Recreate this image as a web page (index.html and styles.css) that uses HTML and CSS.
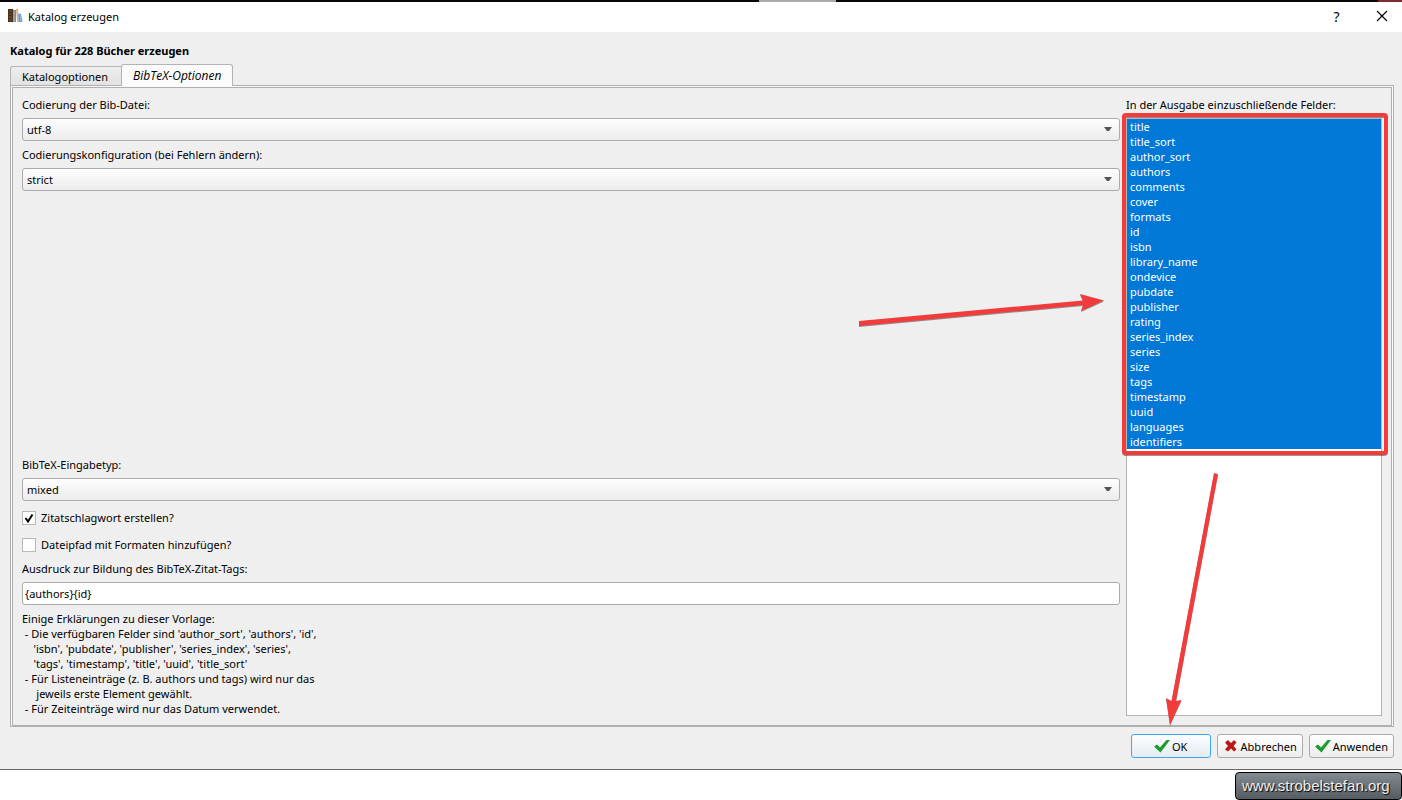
FILE: index.html
```
<!DOCTYPE html>
<html lang="de">
<head>
    <meta charset="utf-8">
    <title>Katalog erzeugen</title>
    <meta name="viewport" content="width=device-width, initial-scale=1.0">
    <link rel="stylesheet" href="styles.css">
</head>
<body>
    <div class="desktop-strip"><span class="strip-window"></span><span class="strip-close"></span></div>

    <header class="titlebar">
        <svg class="app-icon" width="16" height="16" viewBox="0 0 16 16" aria-hidden="true">
            <path d="M1 1h5v13H1z" fill="#4a2f1a"/>
            <path d="M2 3h3M2 6h3M2 9h3M2 12h3" stroke="#85592c"/>
            <path d="M6 2h3v12H6z" fill="#85888b"/>
            <path d="M7 3v11" stroke="#b5b7b9"/>
            <path d="M9 1h2l1 13h-2z" fill="#dfb577"/>
            <path d="M11 6l3-.5L15.500 14H12z" fill="#5a9bea"/>
            <path d="M13 6l1 8" stroke="#8dbcf5"/>
        </svg>
        <span class="titlebar-text">Katalog erzeugen</span>
        <button class="titlebar-btn" type="button" aria-label="Hilfe">?</button>
        <button class="titlebar-btn" type="button" aria-label="Schließen">
            <svg width="12" height="12" viewBox="0 0 12 12"><path d="M1 1l10 10M11 1L1 11" stroke="#000" stroke-width="1.200"/></svg>
        </button>
    </header>

    <form class="dialog">
        <h1>Katalog für 228 Bücher erzeugen</h1>

        <div class="tabs" role="tablist">
            <button class="tab" type="button" role="tab">Katalogoptionen</button>
            <button class="tab active" type="button" role="tab" aria-selected="true">BibTeX-Optionen</button>
        </div>

        <div class="panel">
            <div class="panel-inner">
                <div class="options">
                    <label for="encoding">Codierung der Bib-Datei:</label>
                    <select class="combo" id="encoding"><option>utf-8</option></select>
                    <label for="config">Codierungskonfiguration (bei Fehlern ändern):</label>
                    <select class="combo" id="config"><option>strict</option></select>
                    <label class="push" for="entry">BibTeX-Eingabetyp:</label>
                    <select class="combo" id="entry"><option>mixed</option></select>
                    <label class="check"><input type="checkbox" checked>Zitatschlagwort erstellen?</label>
                    <label class="check"><input type="checkbox">Dateipfad mit Formaten hinzufügen?</label>
                    <label for="template">Ausdruck zur Bildung des BibTeX-Zitat-Tags:</label>
                    <input class="textbox" id="template" type="text" value="{authors}{id}">
                    <p class="notes">Einige Erklärungen zu dieser Vorlage:
 - Die verfügbaren Felder sind 'author_sort', 'authors', 'id',
    'isbn', 'pubdate', 'publisher', 'series_index', 'series',
    'tags', 'timestamp', 'title', 'uuid', 'title_sort'
 - Für Listeneinträge (z. B. authors und tags) wird nur das
     jeweils erste Element gewählt.
 - Für Zeiteinträge wird nur das Datum verwendet.</p>
                </div>

                <div class="fields">
                    <label for="fields">In der Ausgabe einzuschließende Felder:</label>
                    <div class="list-wrap">
                        <select class="list" id="fields" multiple>
                            <option selected>title</option>
                            <option selected>title_sort</option>
                            <option selected>author_sort</option>
                            <option selected>authors</option>
                            <option selected>comments</option>
                            <option selected>cover</option>
                            <option selected>formats</option>
                            <option selected>id</option>
                            <option selected>isbn</option>
                            <option selected>library_name</option>
                            <option selected>ondevice</option>
                            <option selected>pubdate</option>
                            <option selected>publisher</option>
                            <option selected>rating</option>
                            <option selected>series_index</option>
                            <option selected>series</option>
                            <option selected>size</option>
                            <option selected>tags</option>
                            <option selected>timestamp</option>
                            <option selected>uuid</option>
                            <option selected>languages</option>
                            <option selected>identifiers</option>
                        </select>
                        <div class="marker"></div>
                        <svg class="arrow arrow-list" width="250" height="36" viewBox="0 0 250 36" aria-hidden="true">
                            <path d="M3 28l224-20.500L224 1l24 6.500L225 18l2-6L3 33z"/>
                        </svg>
                        <svg class="arrow arrow-ok" width="64" height="256" viewBox="0 0 64 256" aria-hidden="true">
                            <path d="M56 3l4 1L18 231l5.500-1L12 255 8 228l5.500 3z"/>
                        </svg>
                    </div>
                </div>
            </div>
        </div>

        <div class="buttons">
            <button class="btn default" type="button">
                <svg width="16" height="16" viewBox="0 0 16 16"><path d="M0 8.500L3 6.500l3 3L12.500 2H16L6.500 14.500z" fill="#1c9c2b"/></svg>OK
            </button>
            <button class="btn" type="button">
                <svg width="16" height="16" viewBox="0 0 16 16"><path d="M2 4.500l3-2.500L8 5l3-3 2.500 2.500L10.500 8l3 3.500-2.500 2L8 10.500 5 13.500 2 11.500 5 8z" fill="#bd1717"/></svg>Abbrechen
            </button>
            <button class="btn" type="button">
                <svg width="16" height="16" viewBox="0 0 16 16"><path d="M0 8.500L3 6.500l3 3L12.500 2H16L6.500 14.500z" fill="#1c9c2b"/></svg>Anwenden
            </button>
        </div>
    </form>

    <footer class="footer">
        <a class="site" href="#">www.strobelstefan.org</a>
    </footer>
</body>
</html>
```
FILE: styles.css
```
* {
    box-sizing: border-box;
}
body {
    margin: 0;
    min-height: 100vh;
    display: flex;
    flex-direction: column;
    background-color: #fff;
    color: #000;
    font-family: "Noto Sans", "Open Sans", sans-serif;
    font-size: 11px;
    line-height: 15px;
}
button, select, input {
    font: inherit;
    color: inherit;
}
.desktop-strip {
    display: flex;
    height: 2px;
    background-color: #08060a;
}
.strip-window {
    width: 77px;
    margin-left: 759px;
    background-color: #aaa;
}
.strip-close {
    width: 24px;
    margin-left: auto;
    background-color: #7d2a30;
}

/* title bar */
.titlebar {
    display: flex;
    align-items: center;
    height: 30px;
    padding: 0 0 2px 7px;
}
.app-icon {
    margin-right: 5px;
}
.titlebar-text {
    flex: 1;
}
.titlebar-btn {
    display: flex;
    justify-content: center;
    align-items: center;
    width: 45px;
    height: 28px;
    padding: 0 0 0 4px;
    border: none;
    background: none;
    font-size: 14px;
}

/* dialog */
.dialog {
    flex: 1;
    display: flex;
    flex-direction: column;
    padding: 11px 8px 11px 10px;
    background-color: #efefef;
    border-bottom: 1px solid #666;
}
h1 {
    margin: 0 0 6px;
    font-size: 11px;
    font-weight: bold;
}
.tabs {
    display: flex;
    align-items: flex-end;
    height: 22px;
    margin-bottom: -1px;
}
.tab {
    height: 20px;
    padding: 0 13px 0 11px;
    border: 1px solid #b4b4b4;
    border-right: none;
    border-radius: 3px 0 0 0;
    background: linear-gradient(#eee, #e2e2e2);
}
.tab.active {
    position: relative;
    height: 22px;
    padding: 0 11px;
    border-right: 1px solid #b4b4b4;
    border-bottom: none;
    border-radius: 3px 3px 0 0;
    background: #fbfbfb;
    font-family: "Open Sans", sans-serif;
    font-size: 12px;
    font-style: italic;
}
.panel {
    flex: 1;
    display: flex;
    padding: 1px 1px 0;
    border: 1px solid #b0b0b0;
    background-color: #fafafa;
}
.panel-inner {
    flex: 1;
    display: grid;
    grid-template-columns: 1fr 256px;
    gap: 6px;
    padding: 9px;
    border: 1px solid #b0b0b0;
    background-color: #efefef;
}
.options, .fields {
    display: flex;
    flex-direction: column;
    gap: 6px;
    min-width: 0;
}
.push {
    margin-top: auto;
}
.combo, .textbox {
    width: 100%;
    height: 23px;
    border: 1px solid #ababab;
    border-radius: 3px;
}
.combo {
    appearance: none;
    padding: 0 4px;
    background: url("data:image/svg+xml,%3Csvg xmlns='http://www.w3.org/2000/svg' width='8' height='5'%3E%3Cpath d='M0 0h8L5 4H3z' fill='%23555'/%3E%3C/svg%3E") no-repeat right 7px center, linear-gradient(#fefefe, #ececec);
}
.textbox {
    padding: 0 2px;
    background-color: #fff;
}
.check {
    display: flex;
    align-items: center;
    gap: 5px;
    height: 21px;
}
.check input {
    appearance: none;
    width: 14px;
    height: 14px;
    margin: 0;
    border: 1px solid #b8b8b8;
    background-color: #fff;
}
.check input:checked {
    background: #fff url("data:image/svg+xml,%3Csvg xmlns='http://www.w3.org/2000/svg' width='12' height='12'%3E%3Cpath d='M2.500 6l2.500 3.500L9.500 2.500' fill='none' stroke='%23000' stroke-width='2'/%3E%3C/svg%3E") no-repeat center;
}
.notes {
    margin: 0;
    white-space: pre;
}

/* field list */
.list-wrap {
    position: relative;
    flex: 1;
    display: flex;
}
.list {
    width: 100%;
    padding: 0;
    border: 1px solid #b4b4b4;
    border-radius: 0;
    background-color: #fff;
    outline: none;
    overflow: hidden;
}
.list option {
    min-height: 15px;
    padding: 0 3px;
    line-height: 15px;
}
.list option:checked {
    background: linear-gradient(#0078d7, #0078d7);
    -webkit-text-fill-color: #fff;
}
.marker {
    position: absolute;
    top: -5px;
    left: -4px;
    right: -6px;
    height: 342px;
    border: 4px solid #f23b3b;
    border-radius: 4px;
    filter: drop-shadow(0 1px 0 rgba(0, 0, 0, 0.4));
    pointer-events: none;
}
.arrow {
    position: absolute;
    fill: #f23b3b;
    filter: drop-shadow(0 1px 0 rgba(0, 0, 0, 0.4));
    pointer-events: none;
}
.arrow-list {
    top: 175px;
    right: 276px;
}
.arrow-ok {
    top: 352px;
    left: 32px;
}

/* buttons */
.buttons {
    display: flex;
    justify-content: flex-end;
    gap: 6px;
    margin-top: 7px;
}
.btn {
    display: flex;
    justify-content: center;
    align-items: center;
    gap: 2px;
    min-width: 80px;
    height: 24px;
    padding: 0 5px;
    border: 1px solid #ababab;
    border-radius: 3px;
    background: linear-gradient(#fefefe, #ededed);
}
.btn.default {
    border-color: #3da5f5;
    background: linear-gradient(#fcfdfe, #e4ecf3);
}

.footer {
    display: flex;
    justify-content: flex-end;
    height: 30px;
    padding-top: 2px;
}
.site {
    width: 167px;
    height: 28px;
    padding: 0 6px;
    border: 1px solid #000;
    border-radius: 4px;
    background: linear-gradient(#838b92, #555d62);
    color: #eee;
    font-family: "Liberation Sans", Arial, sans-serif;
    font-size: 15px;
    line-height: 26px;
    text-decoration: none;
    text-shadow: 1px 1px 1px #000;
}
```
